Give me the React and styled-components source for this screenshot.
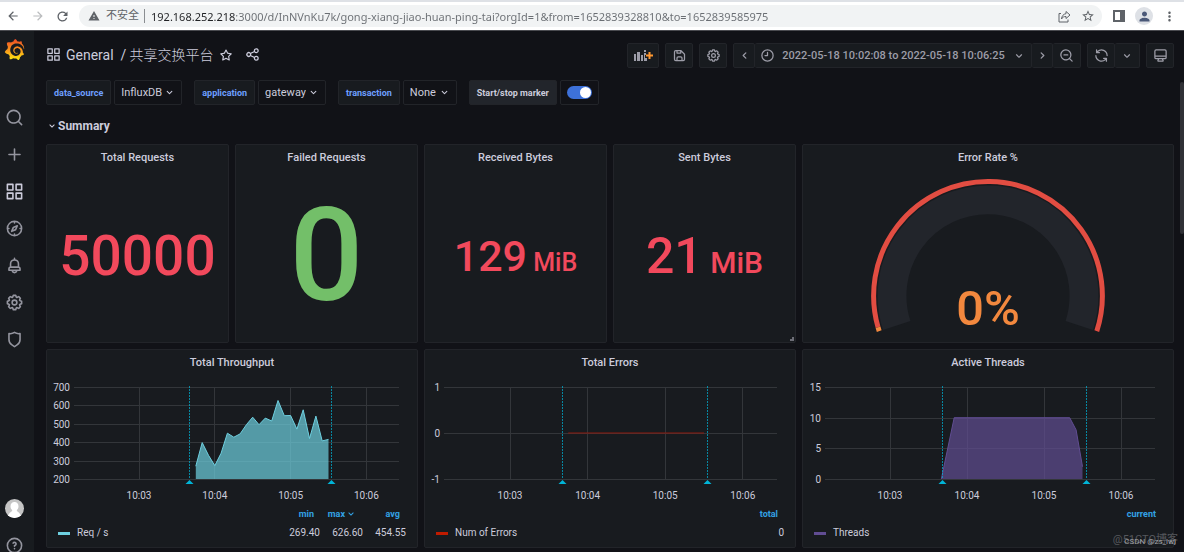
import React from "react";
import styled, { createGlobalStyle } from "styled-components";
import { MdArrowBack, MdArrowForward, MdRefresh, MdWarning, MdStarBorder, MdMoreVert, MdPerson } from "react-icons/md";
import { SiGrafana } from "react-icons/si";

const c = {
  canvas: "#111217",
  panel: "#181b1f",
  border: "#222429",
  text: "#ccccdc",
  dim: "#9d9da8",
  blue: "#6e9fff",
  legend: "#33a2e5",
  marker: "#00b5d8",
};

const GlobalStyle = createGlobalStyle`
  * { box-sizing: border-box; }
  body {
    margin: 0;
    background: ${c.canvas};
    color: ${c.text};
    font-family: Roboto, "Noto Sans CJK SC", sans-serif;
    font-size: 11px;
  }
  button, select, input { font: inherit; color: inherit; margin: 0; }
  button { cursor: pointer; }
`;

/* ---------- icons ---------- */

const paths = {
  apps: "M10,13H3a1,1,0,0,0-1,1v7a1,1,0,0,0,1,1h7a1,1,0,0,0,1-1V14A1,1,0,0,0,10,13ZM9,20H4V15H9ZM21,2H14a1,1,0,0,0-1,1v7a1,1,0,0,0,1,1h7a1,1,0,0,0,1-1V3A1,1,0,0,0,21,2ZM20,9H15V4h5Zm1,4H14a1,1,0,0,0-1,1v7a1,1,0,0,0,1,1h7a1,1,0,0,0,1-1V14A1,1,0,0,0,21,13Zm-1,7H15V15h5ZM10,2H3A1,1,0,0,0,2,3v7a1,1,0,0,0,1,1h7a1,1,0,0,0,1-1V3A1,1,0,0,0,10,2ZM9,9H4V4H9Z",
  search: "M21.71,20.29,18,16.61A9,9,0,1,0,16.61,18l3.68,3.68a1,1,0,0,0,1.42,0A1,1,0,0,0,21.71,20.29ZM11,18a7,7,0,1,1,7-7A7,7,0,0,1,11,18Z",
  zoomOut: "M21.71,20.29,18,16.61A9,9,0,1,0,16.61,18l3.68,3.68a1,1,0,0,0,1.42,0A1,1,0,0,0,21.71,20.29ZM11,18a7,7,0,1,1,7-7A7,7,0,0,1,11,18ZM14,10H8a1,1,0,0,0,0,2h6a1,1,0,0,0,0-2Z",
  plus: "M19,11H13V5a1,1,0,0,0-2,0v6H5a1,1,0,0,0,0,2h6v6a1,1,0,0,0,2,0V13h6a1,1,0,0,0,0-2Z",
  bell: "M18,13.18V10a6,6,0,0,0-5-5.91V3a1,1,0,0,0-2,0V4.09A6,6,0,0,0,6,10v3.18A3,3,0,0,0,4,16v2a1,1,0,0,0,1,1H8.14a4,4,0,0,0,7.72,0H19a1,1,0,0,0,1-1V16A3,3,0,0,0,18,13.18ZM8,10a4,4,0,0,1,8,0v3H8Zm4,10a2,2,0,0,1-1.72-1h3.44A2,2,0,0,1,12,20Zm6-3H6V16a1,1,0,0,1,1-1H17a1,1,0,0,1,1,1Z",
  compass: "M12,2A10,10,0,1,0,22,12,10,10,0,0,0,12,2Zm1,17.93V19a1,1,0,0,0-2,0v.93A8,8,0,0,1,4.07,13H5a1,1,0,0,0,0-2H4.07A8,8,0,0,1,11,4.07V5a1,1,0,0,0,2,0V4.07A8,8,0,0,1,19.93,11H19a1,1,0,0,0,0,2h.93A8,8,0,0,1,13,19.93ZM15.14,7.55l-5,2.12a1,1,0,0,0-.52.52l-2.12,5a1,1,0,0,0,.21,1.1,1,1,0,0,0,.7.29.93.93,0,0,0,.4-.08l5-2.12a1,1,0,0,0,.52-.52l2.12-5a1,1,0,0,0-1.31-1.31Zm-2.49,5.1-2.28,1,1-2.28,2.28-1Z",
  cog: "M21.32,9.55l-1.89-.63.89-1.78A1,1,0,0,0,20.13,6L18,3.87a1,1,0,0,0-1.15-.19l-1.78.89-.63-1.89A1,1,0,0,0,13.5,2h-3a1,1,0,0,0-.95.68L8.92,4.57,7.14,3.68A1,1,0,0,0,6,3.87L3.87,6a1,1,0,0,0-.19,1.15l.89,1.78-1.89.63A1,1,0,0,0,2,10.5v3a1,1,0,0,0,.68.95l1.89.63-.89,1.78A1,1,0,0,0,3.87,18L6,20.13a1,1,0,0,0,1.15.19l1.78-.89.63,1.89a1,1,0,0,0,.95.68h3a1,1,0,0,0,.95-.68l.63-1.89,1.78.89A1,1,0,0,0,18,20.13L20.13,18a1,1,0,0,0,.19-1.15l-.89-1.78,1.89-.63A1,1,0,0,0,22,13.5v-3A1,1,0,0,0,21.32,9.55ZM20,12.78l-1.2.4A2,2,0,0,0,17.64,16l.57,1.14-1.1,1.1L16,17.64a2,2,0,0,0-2.79,1.16l-.4,1.2H11.22l-.4-1.2A2,2,0,0,0,8,17.64l-1.14.57-1.1-1.1L6.36,16A2,2,0,0,0,5.2,13.18L4,12.78V11.22l1.2-.4A2,2,0,0,0,6.36,8L5.79,6.89l1.1-1.1L8,6.36A2,2,0,0,0,10.82,5.2l.4-1.2h1.56l.4,1.2A2,2,0,0,0,16,6.36l1.14-.57,1.1,1.1L17.64,8a2,2,0,0,0,1.16,2.79l1.2.4ZM12,8a4,4,0,1,0,4,4A4,4,0,0,0,12,8Zm0,6a2,2,0,1,1,2-2A2,2,0,0,1,12,14Z",
  shield: "M19.63,3.65a1,1,0,0,0-.84-.2,8,8,0,0,1-6.22-1.27,1,1,0,0,0-1.14,0A8,8,0,0,1,5.21,3.45a1,1,0,0,0-.84.2A1,1,0,0,0,4,4.43v7.45a9,9,0,0,0,3.77,7.33l3.65,2.6a1,1,0,0,0,1.16,0l3.65-2.6A9,9,0,0,0,20,11.88V4.43A1,1,0,0,0,19.63,3.65ZM18,11.88a7,7,0,0,1-2.93,5.7L12,19.77,8.93,17.58A7,7,0,0,1,6,11.88V5.58a10,10,0,0,0,6-1.39,10,10,0,0,0,6,1.39Z",
  star: "M22,9.67A1,1,0,0,0,21.14,9l-5.69-.83L12.9,3a1,1,0,0,0-1.8,0L8.55,8.16,2.86,9a1,1,0,0,0-.81.68,1,1,0,0,0,.25,1l4.13,4-1,5.68A1,1,0,0,0,6.9,21.44L12,18.77l5.1,2.67a.93.93,0,0,0,.46.12,1,1,0,0,0,.59-.19,1,1,0,0,0,.4-1l-1-5.68,4.13-4A1,1,0,0,0,22,9.67Zm-6.15,4a1,1,0,0,0-.29.88l.72,4.2-3.76-2a1.06,1.06,0,0,0-.94,0l-3.76,2,.72-4.2a1,1,0,0,0-.29-.88l-3-3,4.21-.61a1,1,0,0,0,.76-.55L12,5.7l1.88,3.82a1,1,0,0,0,.76.55l4.21.61Z",
  share: "M18,14a4,4,0,0,0-3.08,1.48l-5.1-2.35a3.64,3.64,0,0,0,0-2.26l5.1-2.35A4,4,0,1,0,14,6a4.17,4.17,0,0,0,.07.71L8.79,9.14a4,4,0,1,0,0,5.72l5.28,2.43A4.17,4.17,0,0,0,14,18a4,4,0,1,0,4-4ZM18,4a2,2,0,1,1-2,2A2,2,0,0,1,18,4ZM6,14a2,2,0,1,1,2-2A2,2,0,0,1,6,14Zm12,6a2,2,0,1,1,2-2A2,2,0,0,1,18,20Z",
  save: "M20.71,9.29l-6-6a1,1,0,0,0-.32-.21A1.09,1.09,0,0,0,14,3H6A3,3,0,0,0,3,6V18a3,3,0,0,0,3,3H18a3,3,0,0,0,3-3V10A1,1,0,0,0,20.71,9.29ZM9,5h4V7H9Zm6,14H9V16a1,1,0,0,1,1-1h4a1,1,0,0,1,1,1Zm4-1a1,1,0,0,1-1,1H17V16a3,3,0,0,0-3-3H10a3,3,0,0,0-3,3v3H6a1,1,0,0,1-1-1V6A1,1,0,0,1,6,5H7V8A1,1,0,0,0,8,9h6a1,1,0,0,0,1-1V6.41l4,4Z",
  clock: "M12,2A10,10,0,1,0,22,12,10,10,0,0,0,12,2Zm0,18a8,8,0,1,1,8-8A8,8,0,0,1,12,20ZM12,6a1,1,0,0,0-1,1v4H8a1,1,0,0,0,0,2h4a1,1,0,0,0,1-1V7A1,1,0,0,0,12,6Z",
  sync: "M19.91,15.51H15.38a1,1,0,0,0,0,2h2.4A8,8,0,0,1,4,12a1,1,0,1,0-2,0,10,10,0,0,0,16.88,7.23V21a1,1,0,0,0,2,0V16.5A1,1,0,0,0,19.91,15.51ZM12,2A10,10,0,0,0,5.12,4.77V3a1,1,0,0,0-2,0V7.5a1,1,0,0,0,1,1h4.5a1,1,0,0,0,0-2H6.22A8,8,0,0,1,20,12a1,1,0,0,0,2,0A10,10,0,0,0,12,2Z",
  monitor: "M19,2H5A3,3,0,0,0,2,5V15a3,3,0,0,0,3,3H7.64l-.58,1a2,2,0,0,0,0,2,2,2,0,0,0,1.75,1h6.46A2,2,0,0,0,17,21a2,2,0,0,0,0-2l-.59-1H19a3,3,0,0,0,3-3V5A3,3,0,0,0,19,2ZM8.77,20,10,18H14l1.2,2ZM20,15a1,1,0,0,1-1,1H5a1,1,0,0,1-1-1V14H20Zm0-3H4V5A1,1,0,0,1,5,4H19a1,1,0,0,1,1,1Z",
  down: "M17,9.17a1,1,0,0,0-1.41,0L12,12.71,8.46,9.17a1,1,0,0,0-1.41,0,1,1,0,0,0,0,1.42l4.24,4.24a1,1,0,0,0,1.42,0L17,10.59A1,1,0,0,0,17,9.17Z",
  right: "M14.83,11.29,10.59,7.05a1,1,0,0,0-1.42,0,1,1,0,0,0,0,1.41L12.71,12,9.17,15.54a1,1,0,0,0,0,1.41,1,1,0,0,0,1.42,0l4.24-4.24A1,1,0,0,0,14.83,11.29Z",
  left: "M9.17,11.29,13.41,7.05a1,1,0,0,1,1.42,0,1,1,0,0,1,0,1.41L11.29,12,14.83,15.54a1,1,0,0,1,0,1.41,1,1,0,0,1-1.42,0L9.17,12.71A1,1,0,0,1,9.17,11.29Z",
  help: "M11.29,15.29a1.58,1.58,0,0,0-.12.15.76.76,0,0,0-.09.18.64.64,0,0,0-.06.18,1.36,1.36,0,0,0,0,.2.84.84,0,0,0,.08.38.9.9,0,0,0,.54.54.94.94,0,0,0,.76,0,.9.9,0,0,0,.54-.54A1,1,0,0,0,13,16a1,1,0,0,0-.29-.71A1,1,0,0,0,11.29,15.29ZM12,2A10,10,0,1,0,22,12,10,10,0,0,0,12,2Zm0,18a8,8,0,1,1,8-8A8,8,0,0,1,12,20ZM12,7A3,3,0,0,0,9.4,8.5a1,1,0,1,0,1.73,1A1,1,0,0,1,12,9a1,1,0,0,1,0,2,1,1,0,0,0-1,1v1a1,1,0,0,0,2,0v-.18A3,3,0,0,0,12,7Z",
};

const IconSvg = styled.svg`
  display: block;
  flex: none;
  fill: currentColor;
`;

const Icon = ({ name, size = 15, ...rest }) => (
  <IconSvg viewBox="0 0 24 24" width={size} height={size} aria-hidden="true" {...rest}>
    <path d={paths[name]} />
  </IconSvg>
);

const AddPanelIcon = () => (
  <IconSvg viewBox="0 0 20 14" width="20" height="14" aria-hidden="true">
    <path d="M1 5h2v7H1zM4 3h3v9H4zM8 6h2v6H8zM11 4h2v2h-1v3h2v3h-3zM11 1h2v2h-2z" />
    <path d="M15.500 3h2v2.500h2.500v2h-2.500v2.500h-2v-2.500h-2.500v-2h2.500z" fill="#ff9830" />
  </IconSvg>
);

/* ---------- browser bar ---------- */

const Browser = styled.header`
  display: flex;
  align-items: center;
  gap: 8px;
  height: 31px;
  padding: 0 6px 0 4px;
  background: #fff;
  border-top: 2px solid #dee1e6;
  border-bottom: 1px solid #4a4b50;
  color: #5f6368;
`;

const BrowserButton = styled.button`
  display: flex;
  align-items: center;
  justify-content: center;
  width: ${(p) => p.$w || 17}px;
  height: 18px;
  padding: 0;
  border: 0;
  border-radius: 9px;
  background: ${(p) => p.$bg || "none"};
  color: ${(p) => (p.$faint ? "#babcbe" : p.$ink || "#5f6368")};
`;

const Address = styled.div`
  flex: 1;
  display: flex;
  align-items: center;
  gap: 6px;
  min-width: 0;
  height: 22px;
  padding: 0 6px 0 9px;
  border-radius: 11px;
  background: #f1f3f4;
`;

const Insecure = styled.span`
  padding-right: 5px;
  border-right: 1px solid #8a8d91;
  font-size: 11px;
  line-height: 14px;
  white-space: nowrap;
`;

const Url = styled.input`
  flex: 1;
  min-width: 0;
  padding: 0;
  border: 0;
  outline: 0;
  font-family: "Noto Sans", sans-serif;
  font-size: 11px;
  color: transparent;
  background: linear-gradient(90deg, #202124 85px, #6a6e73 85px);
  -webkit-background-clip: text;
  background-clip: text;
`;

/* ---------- shell ---------- */

const Screen = styled.div`
  display: flex;
  flex-direction: column;
  height: 100vh;
  overflow: hidden;
`;

const Shell = styled.div`
  flex: 1;
  display: flex;
  min-height: 0;
`;

const Sidebar = styled.nav`
  flex: none;
  display: flex;
  flex-direction: column;
  width: 34px;
  padding-right: 5px;
  background: ${c.panel};
  overflow: hidden;
`;

const SideLink = styled.a`
  display: flex;
  align-items: center;
  justify-content: center;
  height: 37px;
  color: ${(p) => (p.$active ? c.text : "#94959f")};
`;

const LogoLink = styled(SideLink)`
  margin-bottom: 31px;
`;

const Logo = styled(SiGrafana)`
  width: 21px;
  height: 21px;
  fill: url(#flame);
`;

const SideFoot = styled.div`
  margin-top: auto;
  margin-bottom: -12px;
`;

const Page = styled.main`
  flex: 1;
  min-width: 0;
  padding: 12px 6px 0 12px;
  overflow: hidden;
`;

const ScrollRail = styled.div`
  flex: none;
  width: 4px;
  padding-top: 51px;
`;

const ScrollThumb = styled.div`
  height: 152px;
  border-radius: 2px;
  background: #303136;
`;

/* ---------- toolbar ---------- */

const Toolbar = styled.div`
  display: flex;
  align-items: center;
  gap: 6px;
  height: 25px;
`;

const Title = styled.h1`
  flex: 1;
  display: flex;
  align-items: center;
  margin: 0;
  padding-bottom: 2px;
  font-size: 14px;
  font-weight: 400;
  line-height: 20px;
  white-space: nowrap;
`;

const Folder = styled.span`
  margin: 0 7px 0 5px;
`;

const DashboardName = styled.span`
  margin: 0 6px 0 3px;
  font-weight: 300;
`;

const TitleButton = styled.button`
  padding: 0;
  margin-right: 12px;
  border: 0;
  background: none;
`;

const ToolButton = styled.button`
  display: flex;
  align-items: center;
  justify-content: center;
  gap: 7px;
  width: ${(p) => p.$w || 28}px;
  height: 25px;
  padding: 0;
  border: 1px solid ${c.border};
  border-radius: 2px;
  background: ${c.panel};
  color: ${c.dim};
  font-weight: 500;
  white-space: nowrap;
`;

const ToolGroup = styled.div`
  display: flex;
  ${ToolButton} + ${ToolButton} {
    border-left: 0;
  }
`;

/* ---------- variables ---------- */

const Variables = styled.form`
  display: flex;
  gap: 12px;
  margin-top: 12px;
`;

const Variable = styled.div`
  display: flex;
  gap: 3px;
`;

const VarLabel = styled.label`
  display: flex;
  align-items: center;
  height: 25px;
  padding: 0 7px;
  border: 1px solid ${c.border};
  border-radius: 2px;
  background: ${(p) => (p.$plain ? "#22252b" : c.panel)};
  color: ${(p) => (p.$plain ? c.text : c.blue)};
  font-size: 9px;
  font-weight: 700;
  white-space: nowrap;
`;

const SelectBox = styled.div`
  display: grid;
  align-items: center;
  > * {
    grid-area: 1 / 1;
  }
  > svg {
    justify-self: end;
    margin-right: 6px;
    pointer-events: none;
  }
`;

const Select = styled.select`
  appearance: none;
  height: 25px;
  padding: 0 19px 0 6px;
  border: 1px solid ${c.border};
  border-radius: 2px;
  background: ${c.canvas};
  font-size: 11px;
`;

const ToggleBox = styled.div`
  display: flex;
  align-items: center;
  height: 25px;
  padding: 0 6px;
  border: 1px solid ${c.border};
  border-radius: 2px;
`;

const Toggle = styled.input`
  appearance: none;
  display: flex;
  width: 25px;
  height: 13px;
  padding: 1px;
  border-radius: 7px;
  background: #3d71d9;
  justify-content: flex-end;
  &::before {
    content: "";
    width: 11px;
    height: 11px;
    border-radius: 50%;
    background: #fff;
  }
`;

const RowToggle = styled.button`
  display: flex;
  align-items: center;
  height: 26px;
  margin: 8px 0 5px;
  padding: 0;
  border: 0;
  background: none;
  font-size: 12px;
  font-weight: 700;
`;

/* ---------- panels ---------- */

const Grid = styled.div`
  display: grid;
  grid-template-columns: repeat(6, minmax(0, 1fr));
  grid-auto-rows: 199px;
  gap: 6px;
`;

const PanelBox = styled.section`
  grid-column: span ${(p) => p.$span || 1};
  display: flex;
  flex-direction: column;
  min-width: 0;
  border: 1px solid ${c.border};
  border-radius: 2px;
  background: ${c.panel};
`;

const PanelTitle = styled.h2`
  flex: none;
  margin: 0;
  font-size: 11px;
  font-weight: 500;
  line-height: 25px;
  text-align: center;
`;

const Panel = ({ title, span, children }) => (
  <PanelBox $span={span} aria-label={title}>
    <PanelTitle>{title}</PanelTitle>
    {children}
  </PanelBox>
);

const Stat = styled.div`
  flex: 1;
  display: flex;
  align-items: center;
  justify-content: center;
  min-height: 0;
  line-height: 1;
  font-weight: 500;
  font-size: ${(p) => p.$size}px;
  color: ${(p) => p.$color || "#f2495c"};
`;

const StatUnit = styled.small`
  font-size: ${(p) => p.$size}px;
`;

const ResizeHandle = styled.i`
  align-self: flex-end;
  width: 4px;
  height: 4px;
  margin: -5px 1px 1px 0;
  border-right: 2px solid #6c6d76;
  border-bottom: 2px solid #6c6d76;
`;

const GaugeSvg = styled.svg`
  display: block;
  width: 100%;
  height: 170px;
`;

const GaugeValue = styled.text`
  fill: #f2883e;
  font-size: 49px;
  font-weight: 500;
  text-anchor: middle;
`;

const polar = (r, deg) => {
  const a = (deg * Math.PI) / 180;
  return `${(186 + r * Math.cos(a)).toFixed(2)} ${(126 + r * Math.sin(a)).toFixed(2)}`;
};
const arc = (r, from, to) => `M${polar(r, from)}A${r} ${r} 0 ${to - from > 180 ? 1 : 0} 1 ${polar(r, to)}`;

const Gauge = () => (
  <GaugeSvg viewBox="0 0 372 170" role="img" aria-label="Error rate 0%">
    <g fill="none">
      <path d={arc(96.5, 162, 378)} stroke="#22252b" strokeWidth="29" />
      <path d={arc(115, 164, 378)} stroke="#e24d42" strokeWidth="5" />
      <path d={arc(115, 162, 164)} stroke="#f2883e" strokeWidth="5" />
    </g>
    <GaugeValue x="186" y="155">0%</GaugeValue>
  </GaugeSvg>
);

/* ---------- time charts ---------- */

const ChartSvg = styled.svg`
  display: block;
  width: 100%;
  height: 130px;
`;

const AxisText = styled.text`
  fill: ${c.text};
  font-size: 10px;
  text-anchor: ${(p) => p.$anchor || "middle"};
`;

const TOP = 12;
const BOTTOM = 104;

// Samples are [seconds after 10:03:00, value].
const Chart = ({ label, left, right, first, minute, ticks, data, fill, stroke, marks }) => {
  const lo = ticks[0];
  const hi = ticks[ticks.length - 1];
  const y = (v) => TOP + ((hi - v) / (hi - lo)) * (BOTTOM - TOP);
  const x = (s) => first + (s / 60) * minute;
  const line = data.map(([s, v]) => `${x(s).toFixed(1)},${y(v).toFixed(1)}`);
  const base = y(Math.max(lo, 0)).toFixed(1);
  const start = x(data[0][0]).toFixed(1);
  const end = x(data[data.length - 1][0]).toFixed(1);
  return (
    <ChartSvg viewBox="0 0 370 130" role="img" aria-label={label}>
      <g stroke="#33363a" shapeRendering="crispEdges">
        {ticks.map((t) => (
          <path key={t} d={`M${left} ${Math.round(y(t)) + 0.5}H${right}`} />
        ))}
        {[0, 1, 2, 3].map((m) => (
          <path key={m} d={`M${Math.floor(x(m * 60)) + 0.5} ${TOP}V${BOTTOM}`} />
        ))}
      </g>
      {fill && <polygon points={`${start},${base} ${line.join(" ")} ${end},${base}`} fill={fill} />}
      <polyline points={line.join(" ")} fill="none" stroke={stroke} />
      {marks.map((m) => (
        <g key={m}>
          <path d={`M${m + 0.5} 11V${BOTTOM}`} stroke={c.marker} strokeOpacity="0.7" strokeDasharray="2 1" />
          <path d={`M${m - 3.5} 109L${m + 0.5} 105L${m + 4.5} 109Z`} fill={c.marker} />
        </g>
      ))}
      {ticks.map((t) => (
        <AxisText key={t} x={left - 4} y={Math.round(y(t)) + 4} $anchor="end">{t}</AxisText>
      ))}
      {[0, 1, 2, 3].map((m) => (
        <AxisText key={m} x={x(m * 60)} y="124">{`10:0${m + 3}`}</AxisText>
      ))}
    </ChartSvg>
  );
};

const Legend = styled.table`
  width: 100%;
  padding: 0 5px 0 11px;
  border-collapse: separate;
  border-spacing: 0;
  font-size: 10px;
  line-height: 19px;
  th,
  td {
    padding: 0 6px 0 0;
    text-align: right;
    font-weight: 400;
  }
  thead th {
    padding-right: 12px;
    color: ${c.legend};
    font-size: 9px;
    font-weight: 700;
    line-height: 18px;
  }
  th:first-child {
    text-align: left;
  }
`;

const StatHead = styled.th`
  width: ${(p) => p.$w || 43}px;
`;

const SortButton = styled.button`
  display: inline-flex;
  align-items: center;
  padding: 0;
  border: 0;
  background: none;
`;

const Swatch = styled.span`
  display: inline-block;
  width: 12px;
  height: 3px;
  margin-right: 7px;
  vertical-align: middle;
  background: ${(p) => p.$color};
`;

const ChartLegend = ({ color, name, heads, values, sorted }) => (
  <Legend>
    <thead>
      <tr>
        <th aria-label="series" />
        {heads.map((h) => (
          <StatHead key={h} scope="col">
            <SortButton type="button">
              {h}
              {h === sorted && <Icon name="down" size={12} />}
            </SortButton>
          </StatHead>
        ))}
      </tr>
    </thead>
    <tbody>
      <tr>
        <th scope="row">
          <Swatch $color={color} />
          {name}
        </th>
        {values.map((v, i) => (
          <td key={i}>{v}</td>
        ))}
      </tr>
    </tbody>
  </Legend>
);

const throughput = [
  269.4, 398, 329, 273, 340, 449, 427, 445, 495, 536, 495, 531, 515, 626.6, 544, 545, 471, 576, 420, 542, 407, 415,
].map((v, i) => [45 + i * 5, v]);
const errors = [[45, 0], [150, 0]];
const threads = [[40, 0], [50, 10], [140, 10], [145, 8], [150, 2]];

/* ---------- corner credits ---------- */

const Credit = styled.span`
  position: absolute;
  right: ${(p) => p.$right}px;
  bottom: ${(p) => p.$bottom}px;
  color: ${(p) => p.$color};
  font-size: ${(p) => p.$size}px;
  line-height: 14px;
  white-space: nowrap;
  pointer-events: none;
`;

const sideItems = [
  ["search", "Search"],
  ["plus", "Create"],
  ["apps", "Dashboards"],
  ["compass", "Explore"],
  ["bell", "Alerting"],
  ["cog", "Configuration"],
  ["shield", "Server admin"],
];

const variables = [
  ["data_source", "InfluxDB"],
  ["application", "gateway"],
  ["transaction", "None"],
];

export default function App() {
  return (
    <Screen>
      <GlobalStyle />
      <Browser>
        <BrowserButton aria-label="Back"><MdArrowBack size={14} /></BrowserButton>
        <BrowserButton aria-label="Forward" $faint><MdArrowForward size={14} /></BrowserButton>
        <BrowserButton aria-label="Reload"><MdRefresh size={15} /></BrowserButton>
        <Address>
          <MdWarning size={12} />
          <Insecure>不安全</Insecure>
          <Url
            aria-label="Address"
            readOnly
            value="192.168.252.218:3000/d/InNVnKu7k/gong-xiang-jiao-huan-ping-tai?orgId=1&from=1652839328810&to=1652839585975"
          />
          <BrowserButton aria-label="Share page" $w={18}>
            <svg width="13" height="13" viewBox="0 0 13 13" fill="none" stroke="currentColor">
              <path d="M3 3.500H1V12H10V9.500" />
              <path d="M8 1.500L12 5L8 8.500V6.500C6 6.500 4.500 7 3.500 9C3.700 6 5.500 4 8 3.700Z" strokeLinejoin="round" />
            </svg>
          </BrowserButton>
          <BrowserButton aria-label="Bookmark"><MdStarBorder size={14} /></BrowserButton>
        </Address>
        <BrowserButton aria-label="Side panel">
          <svg width="12" height="12" viewBox="0 0 12 12">
            <path d="M1 1H11V11H1Z" fill="none" stroke="currentColor" strokeWidth="2" />
            <path d="M7 0H12V12H7Z" fill="currentColor" />
          </svg>
        </BrowserButton>
        <BrowserButton aria-label="Profile" $w={18} $bg="#dee1e6" $ink="#4a5878"><MdPerson size={15} /></BrowserButton>
        <BrowserButton aria-label="Menu"><MdMoreVert size={15} /></BrowserButton>
      </Browser>

      <Shell>
        <Sidebar aria-label="Main">
          <LogoLink href="#home" aria-label="Home">
            <svg width="0" height="0" aria-hidden="true">
              <linearGradient id="flame" x1="0" y1="1" x2="0" y2="0">
                <stop offset="0" stopColor="#fcea10" />
                <stop offset="0.45" stopColor="#f99a1c" />
                <stop offset="1" stopColor="#ee4b26" />
              </linearGradient>
            </svg>
            <Logo />
          </LogoLink>
          {sideItems.map(([icon, label]) => (
            <SideLink key={icon} href={`#${icon}`} aria-label={label} $active={icon === "apps"}>
              <Icon name={icon} size={19} />
            </SideLink>
          ))}
          <SideFoot>
            <SideLink href="#profile" aria-label="Profile">
              <svg width="19" height="19" viewBox="0 0 19 19">
                <clipPath id="disc"><circle cx="9.500" cy="9.500" r="9.500" /></clipPath>
                <g clipPath="url(#disc)">
                  <path d="M0 0H19V19H0Z" fill="#c5c5c5" />
                  <path d="M9.500 3C12 3 13.500 4.700 13.500 7.200C13.500 9 12.700 10.300 11.700 11.200C12 13 15.500 13 16.500 19H2.500C3.500 13 7 13 7.300 11.200C6.300 10.300 5.500 9 5.500 7.200C5.500 4.700 7 3 9.500 3Z" fill="#fff" />
                </g>
              </svg>
            </SideLink>
            <SideLink href="#help" aria-label="Help"><Icon name="help" size={19} /></SideLink>
          </SideFoot>
        </Sidebar>

        <Page>
          <Toolbar>
            <Title>
              <Icon name="apps" size={15} />
              <Folder>General</Folder>/
              <DashboardName>共享交换平台</DashboardName>
              <TitleButton aria-label="Mark as favorite"><Icon name="star" size={14} /></TitleButton>
              <TitleButton aria-label="Share dashboard"><Icon name="share" size={15} /></TitleButton>
            </Title>
            <ToolButton $w={32} aria-label="Add panel"><AddPanelIcon /></ToolButton>
            <ToolButton aria-label="Save dashboard"><Icon name="save" /></ToolButton>
            <ToolButton aria-label="Dashboard settings"><Icon name="cog" /></ToolButton>
            <ToolGroup>
              <ToolButton $w={22} aria-label="Earlier"><Icon name="left" /></ToolButton>
              <ToolButton $w={277}>
                <Icon name="clock" />
                2022-05-18 10:02:08 to 2022-05-18 10:06:25
                <Icon name="down" size={14} />
              </ToolButton>
              <ToolButton $w={21} aria-label="Later"><Icon name="right" /></ToolButton>
              <ToolButton aria-label="Zoom out"><Icon name="zoomOut" /></ToolButton>
            </ToolGroup>
            <ToolGroup>
              <ToolButton aria-label="Refresh"><Icon name="sync" /></ToolButton>
              <ToolButton $w={25} aria-label="Refresh interval"><Icon name="down" size={14} /></ToolButton>
            </ToolGroup>
            <ToolButton aria-label="Cycle view mode"><Icon name="monitor" /></ToolButton>
          </Toolbar>

          <Variables>
            {variables.map(([name, value]) => (
              <Variable key={name}>
                <VarLabel htmlFor={name}>{name}</VarLabel>
                <SelectBox>
                  <Select id={name} defaultValue={value}>
                    <option>{value}</option>
                  </Select>
                  <Icon name="down" size={13} />
                </SelectBox>
              </Variable>
            ))}
            <Variable>
              <VarLabel htmlFor="marker" $plain>Start/stop marker</VarLabel>
              <ToggleBox>
                <Toggle id="marker" type="checkbox" defaultChecked />
              </ToggleBox>
            </Variable>
          </Variables>

          <RowToggle aria-expanded="true">
            <Icon name="down" size={12} />
            Summary
          </RowToggle>

          <Grid>
            <Panel title="Total Requests"><Stat $size={55}>50000</Stat></Panel>
            <Panel title="Failed Requests"><Stat $size={130} $color="#73bf69">0</Stat></Panel>
            <Panel title="Received Bytes">
              <Stat $size={43}>
                <span>129<StatUnit $size={25}> MiB</StatUnit></span>
              </Stat>
            </Panel>
            <Panel title="Sent Bytes">
              <Stat $size={50}>
                <span>21<StatUnit $size={30}> MiB</StatUnit></span>
              </Stat>
              <ResizeHandle />
            </Panel>
            <Panel title="Error Rate %" span={2}><Gauge /></Panel>

            <Panel title="Total Throughput" span={2}>
              <Chart
                label="Requests per second over time"
                left={27} right={352} first={92} minute={75.8}
                ticks={[200, 300, 400, 500, 600, 700]}
                data={throughput} fill="rgba(110, 208, 224, 0.7)" stroke="#6ed0e0"
                marks={[142, 284]}
              />
              <ChartLegend color="#6ed0e0" name="Req / s" heads={["min", "max", "avg"]} values={["269.40", "626.60", "454.55"]} sorted="max" />
            </Panel>
            <Panel title="Total Errors" span={2}>
              <Chart
                label="Errors over time"
                left={19} right={352} first={85} minute={77.6}
                ticks={[-1, 0, 1]}
                data={errors} stroke="#8f1a0e"
                marks={[137, 282]}
              />
              <ChartLegend color="#bf1b00" name="Num of Errors" heads={["total"]} values={["0"]} />
            </Panel>
            <Panel title="Active Threads" span={2}>
              <Chart
                label="Active threads over time"
                left={22} right={352} first={87} minute={77}
                ticks={[0, 5, 10, 15]}
                data={threads} fill="rgba(97, 77, 147, 0.7)" stroke="#614d93"
                marks={[139, 283]}
              />
              <ChartLegend color="#614d93" name="Threads" heads={["current"]} values={[""]} />
            </Panel>
          </Grid>
        </Page>
        <ScrollRail><ScrollThumb /></ScrollRail>
      </Shell>
      <Credit $right={6} $bottom={5} $size={11} $color="#55575c">@51CTO博客</Credit>
      <Credit $right={8} $bottom={3} $size={8} $color="#a2a3a8">CSDN @zs_lwj</Credit>
    </Screen>
  );
}
